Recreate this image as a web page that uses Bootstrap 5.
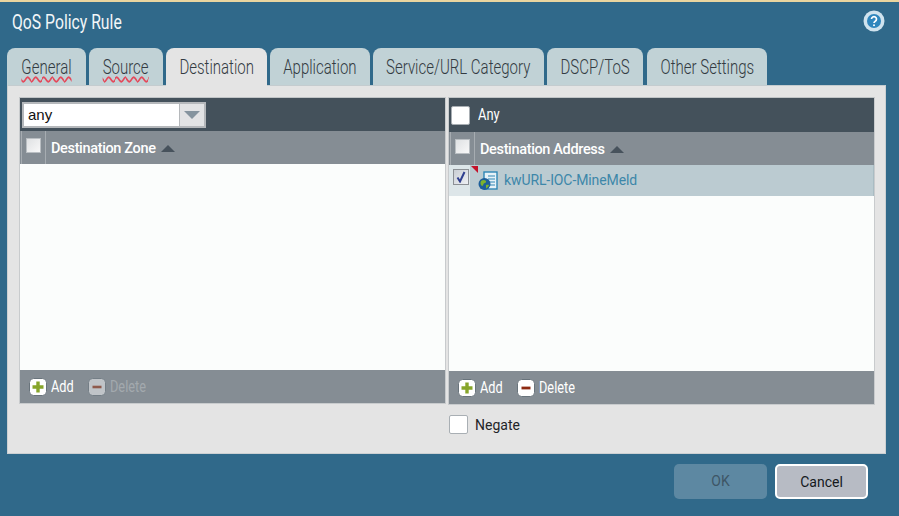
<!DOCTYPE html>
<html lang="en"><head><meta charset="utf-8"><title>QoS Policy Rule</title>
<link rel="stylesheet" href="https://cdn.jsdelivr.net/npm/bootstrap@5.3.0/dist/css/bootstrap.min.css">
<style>
html,body{height:516px;overflow:hidden}
body{background:#30698a;font-family:Roboto,"Liberation Sans",sans-serif;font-weight:400}
.topline{height:2px;background:#e9d59f}
.dlg-head{height:46px;padding:8px 14px 0 12px}
.dlg-title{font-size:21px;line-height:24px;color:#f2f6f8;font-weight:400;margin:0;display:inline-block;white-space:nowrap;transform:scaleX(.75);transform-origin:left center}
.help-ico{width:22px;height:22px}
.tabrow{padding-left:7px;gap:3px;height:37px;border:0;flex-wrap:nowrap}
.tabrow .tabitem{height:37px;background:#c1d2d6;border-radius:8px 8px 0 0;font-size:20px;line-height:38px;color:#333b42;display:flex;justify-content:center;white-space:nowrap;font-weight:300}
.tabrow .tabitem.on{background:#e4e4e4;height:38px}
.tablbl{display:inline-block;flex:none;transform:scaleX(.75)}
.w-general{width:79px}.w-source{width:74px}.w-dest{width:101px}.w-app{width:100px}.w-svc{width:171px}.w-dscp{width:96px;margin-right:1px}.w-other{width:120px}
.wavy{text-decoration:underline wavy #e4495b 1.5px;text-underline-offset:2px}
.sheet{margin-left:7px;width:879px;height:369px;background:#e4e4e4;border:1px solid #ccd0d2;border-top-color:#c4cccf;padding:11px 10px 0 11px}
.cols{gap:2px}
.pane{width:427px;display:flex;flex-direction:column;border:1px solid #c8cbcd;border-top:1px solid #c0c4c6}
.pane-l{height:307px}.pane-r{height:308px}
.bar-dark{background:#44515b;height:33px;padding:0 2px;color:#fff}
.pane-r .bar-dark{height:34px}
.bar-gray{background:#858d94;height:33px;color:#fff;font-size:14.5px;font-weight:500;letter-spacing:-.35px}
.chkcell{width:25px;border-left:1px solid #a6acb1;border-right:1px solid #a6acb1;margin-left:1px;height:100%;padding-top:7px;padding-left:4px}
.minibox{width:15px;height:15px;background:linear-gradient(135deg,#dfe1e3,#f8f8f8);border:1px solid #b9bec2;display:block}
.colname{padding-left:5px;padding-top:3px}
.tri-up{width:0;height:0;border-left:7px solid transparent;border-right:7px solid transparent;border-bottom:7px solid #47525c;margin-left:5px;margin-top:1px}
.combo{width:184px;height:26px;background:#fff;border:2px solid #b5b8bb;display:flex}
.combo-txt{flex:1;font-size:15px;color:#111;line-height:22px;padding-left:4px;font-family:"Liberation Sans",sans-serif}
.combo-btn{width:25px;background:#e2e3e4;border-left:1px solid #b5b8bb;display:flex;align-items:center;justify-content:center}
.tri-down{width:0;height:0;border-left:8px solid transparent;border-right:8px solid transparent;border-top:8px solid #85949e}
.bigbox{width:19px;height:19px;background:#fff;border:1px solid #a8aeb3;border-radius:2px;display:block}
.anylbl{font-size:17px;margin-left:8px;display:inline-block;transform:scaleX(.76);transform-origin:left center}
.listarea{flex:1;background:#fbfdfc}
.selrow{height:31px;background:#bbcbd1;position:relative;border-right:1px solid #a9bcc3}
.chk-sel{width:21px;background:#dde6e9;height:100%;padding:4px 0 0 4px}
.boxchk{width:16px;height:16px;background:linear-gradient(135deg,#c9ced4,#eef0f4);border:1px solid #8c9095;display:flex;align-items:center;justify-content:center}
.redcorner{position:absolute;left:22px;top:1px;width:0;height:0;border-top:7px solid #c4122a;border-left:7px solid transparent}
.entry-ico{width:20px;height:20px;margin-left:8px;margin-top:1px}
.entry-name{font-size:14px;color:#3d87a9;margin-left:6px;letter-spacing:-.1px}
.bar-foot{height:33px;background:#858d94;padding-left:9px;font-size:17px;color:#fff;gap:15px}
.footact{gap:4px}
.off{color:#a3a9ae}
.opt-ico{width:18px;height:18px;display:block;flex:none}
.actlbl{display:inline-block;white-space:nowrap;transform:scaleX(.75);transform-origin:left center}
.lbl-add{width:22px}.lbl-del{width:36px}
.negrow{padding:10px 0 0 430px;height:41px;font-size:14px;color:#1f2428}
.bigbox2{width:19px;height:19px;background:#fff;border:1px solid #a9afb4;border-radius:2px;display:block;margin-right:7px}
.btnrow{padding:10px 31px 0 0;gap:8px}
.okbtn,.cancelbtn{width:93px;height:35px;border-radius:5px;font-size:14px;padding:0;line-height:33px}
.okbtn,.okbtn:disabled{background:#5d88a2;border:0;color:#3e5666;opacity:1;line-height:35px}
.cancelbtn,.cancelbtn:hover{background:#b7bbc4;border:2px solid #fff;color:#14181c}
</style></head>
<body>
<div class="topline"></div>
<div class="dlg-head d-flex justify-content-between align-items-start">
  <h1 class="dlg-title">QoS Policy Rule</h1>
  <svg class="help-ico" viewBox="0 0 22 22" aria-hidden="true"><circle cx="11" cy="11" r="10.500" fill="#cfe3ee"/><circle cx="11" cy="11" r="7" fill="#2f86bd"/><path d="M8.500 9a2.500 2.500 0 1 1 3.800 2.200c-.9.6-1.300 1-1.300 1.800" fill="none" stroke="#fff" stroke-width="1.700"/><circle cx="11" cy="15.300" r="1" fill="#fff"/></svg>
</div>
<div class="nav tabrow d-flex">
  <div class="tabitem w-general"><span class="tablbl wavy">General</span></div>
  <div class="tabitem w-source"><span class="tablbl wavy">Source</span></div>
  <div class="tabitem on w-dest"><span class="tablbl">Destination</span></div>
  <div class="tabitem w-app"><span class="tablbl">Application</span></div>
  <div class="tabitem w-svc"><span class="tablbl">Service/URL Category</span></div>
  <div class="tabitem w-dscp"><span class="tablbl">DSCP/ToS</span></div>
  <div class="tabitem w-other"><span class="tablbl">Other Settings</span></div>
</div>
<div class="sheet">
  <div class="d-flex cols">
    <section class="pane pane-l">
      <div class="bar-dark d-flex align-items-center"><div class="combo"><div class="combo-txt">any</div><div class="combo-btn"><span class="tri-down"></span></div></div></div>
      <div class="bar-gray d-flex align-items-center"><div class="chkcell"><span class="minibox"></span></div><span class="colname">Destination Zone</span><span class="tri-up"></span></div>
      <div class="listarea"></div>
      <div class="bar-foot d-flex align-items-center">
        <div class="d-flex align-items-center footact"><svg class="opt-ico" viewBox="0 0 18 18" aria-hidden="true"><rect x="0.5" y="0.5" width="17" height="17" rx="4" fill="#fff" stroke="#69747c"/><path d="M9 3.500v11M3.500 9h11" stroke="#87a52a" stroke-width="3.400"/></svg><span class="actlbl lbl-add">Add</span></div>
        <div class="d-flex align-items-center footact off"><svg class="opt-ico" viewBox="0 0 18 18" aria-hidden="true"><rect x="0.5" y="0.5" width="17" height="17" rx="4" fill="#c0c4c8" stroke="#747e86"/><path d="M4.500 9h9" stroke="#8f5a4c" stroke-width="2.600"/></svg><span class="actlbl lbl-del">Delete</span></div>
      </div>
    </section>
    <section class="pane pane-r">
      <div class="bar-dark d-flex align-items-center"><span class="bigbox"></span><span class="anylbl">Any</span></div>
      <div class="bar-gray d-flex align-items-center"><div class="chkcell"><span class="minibox"></span></div><span class="colname">Destination Address</span><span class="tri-up"></span></div>
      <div class="selrow d-flex">
        <div class="chk-sel"><span class="boxchk"><svg width="12" height="12" viewBox="0 0 12 12" aria-hidden="true"><path d="M2.500 6.500l2.500 4 4.500-9.500" fill="none" stroke="#2f3f8f" stroke-width="2"/></svg></span></div>
        <span class="redcorner"></span>
        <svg class="entry-ico align-self-center" viewBox="0 0 20 20" aria-hidden="true"><rect x="6" y="1" width="13" height="17" fill="#e6f2f8" stroke="#2e86b5" stroke-width="1.400"/><path d="M10 5h7M10 8h7M11 11h6M12 14h5" stroke="#2e86b5"/><circle cx="6.500" cy="13" r="6" fill="#1d5f9a"/><path d="M3 10c2-1.500 4-1 5 0 .5 1.500-1 2-2 2.500-1 .5-.5 2.500-2 2.500-1.500-1-2-3-1-5zM8 14c1.500-.5 2.500 0 3 0-.5 2-2 3-3 3.500z" fill="#7db32e"/></svg>
        <span class="entry-name align-self-center">kwURL-IOC-MineMeld</span>
      </div>
      <div class="listarea"></div>
      <div class="bar-foot d-flex align-items-center">
        <div class="d-flex align-items-center footact"><svg class="opt-ico" viewBox="0 0 18 18" aria-hidden="true"><rect x="0.5" y="0.5" width="17" height="17" rx="4" fill="#fff" stroke="#69747c"/><path d="M9 3.500v11M3.500 9h11" stroke="#87a52a" stroke-width="3.400"/></svg><span class="actlbl lbl-add">Add</span></div>
        <div class="d-flex align-items-center footact"><svg class="opt-ico" viewBox="0 0 18 18" aria-hidden="true"><rect x="0.5" y="0.5" width="17" height="17" rx="4" fill="#fff" stroke="#69747c"/><path d="M4.500 9h9" stroke="#8e2a12" stroke-width="2.800"/></svg><span class="actlbl lbl-del">Delete</span></div>
      </div>
    </section>
  </div>
  <div class="negrow d-flex align-items-start"><span class="bigbox2"></span><span>Negate</span></div>
</div>
<div class="btnrow d-flex justify-content-end">
  <button class="btn okbtn" disabled>OK</button>
  <button class="btn cancelbtn">Cancel</button>
</div>
</body></html>
